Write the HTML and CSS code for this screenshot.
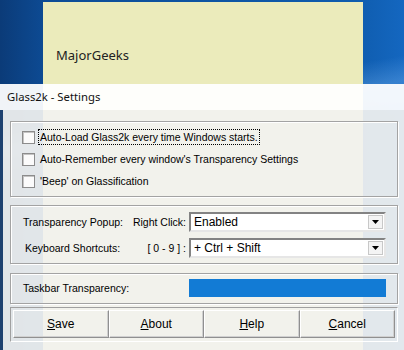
FILE: index.html
```html
<!DOCTYPE html>
<html lang="en">
<head>
    <meta charset="UTF-8">
    <title>Glass2k - Settings</title>
    <link rel="stylesheet" href="styles.css">
</head>
<body>
    <div class="desktop">
        <div class="note"><span>MajorGeeks</span></div>

        <div class="window">
            <div class="titlebar">Glass2k - Settings</div>
            <div class="client">
                <div class="group options">
                    <label class="check"><span class="box"></span><span class="focus">Auto-Load Glass2k every time Windows starts.</span></label>
                    <label class="check"><span class="box"></span><span>Auto-Remember every window's Transparency Settings</span></label>
                    <label class="check"><span class="box"></span><span>'Beep' on Glassification</span></label>
                </div>

                <div class="group popup">
                    <span class="lbl">Transparency Popup:</span>
                    <span class="sub">Right Click:</span>
                    <div class="combo">
                        <span>Enabled</span>
                        <span class="drop"><svg width="7" height="4" viewBox="0 0 7 4"><path d="M0 0h7L3.5 4z" fill="#000"/></svg></span>
                    </div>

                    <span class="lbl shift">Keyboard Shortcuts:</span>
                    <span class="sub">[ 0 - 9 ] :</span>
                    <div class="combo">
                        <span>+ Ctrl + Shift</span>
                        <span class="drop"><svg width="7" height="4" viewBox="0 0 7 4"><path d="M0 0h7L3.5 4z" fill="#000"/></svg></span>
                    </div>
                </div>

                <div class="group taskbar">
                    <span class="lbl">Taskbar Transparency:</span>
                    <div class="bar"></div>
                </div>

                <div class="buttons">
                    <button><u>S</u>ave</button>
                    <button><u>A</u>bout</button>
                    <button><u>H</u>elp</button>
                    <button><u>C</u>ancel</button>
                </div>
            </div>
        </div>
    </div>
</body>
</html>
```

FILE: styles.css
```css
body {
    margin: 0;
    font-family: "Liberation Sans", Arial, sans-serif;
    font-size: 10.5px;
    color: #000;
}
.desktop {
    width: 404px;
    height: 350px;
    display: grid;
    grid-template-columns: 43px 320px 1fr;
    grid-template-rows: 84px 1fr;
    background:
        linear-gradient(170deg, transparent 0 30%, rgba(120,180,240,0.35) 36%, transparent 44%),
        linear-gradient(90deg, #0b3b78 0%, #0d4c96 12%, #0f5cae 88%, #1467c0 100%);
    overflow: hidden;
}
.note {
    grid-column: 2;
    grid-row: 1 / 3;
    margin-top: 2px;
    background: #ebebbb;
    padding: 43px 13px 0;
    font-family: "Noto Sans", sans-serif;
    font-size: 13px;
    color: #222;
    line-height: 20px;
}
.window {
    grid-column: 1 / -1;
    grid-row: 2;
    z-index: 1;
    display: flex;
    flex-direction: column;
}
.titlebar {
    height: 26px;
    line-height: 26px;
    padding-left: 7px;
    background: rgba(255, 255, 255, 0.94);
    font-family: "Noto Sans", sans-serif;
    font-size: 11.3px;
    color: #111;
}
.client {
    flex: 1;
    background: rgba(242, 242, 240, 0.93);
    border-left: 3px solid #1d416f;
    padding: 11px 6px 0 7px;
}
.group {
    border: 1px solid #a3a3a3;
    box-shadow: inset 1px 1px #fff, 1px 1px #fff;
}
.options {
    padding: 4px 11px;
}
.check {
    display: flex;
    align-items: center;
    height: 22px;
    gap: 5px;
}
.box {
    width: 11px;
    height: 11px;
    border: 1px solid #8c8c8c;
    box-shadow: inset 1px 1px #c4c4c4;
    background: #fbfbfb;
}
.focus {
    outline: 1px dotted #000;
    outline-offset: 1px;
}
.popup {
    margin-top: 8px;
    padding: 6px 11px 5px 12px;
    display: grid;
    grid-template-columns: auto 1fr 197px;
    row-gap: 6px;
    align-items: center;
}
.lbl.shift {
    padding-left: 2px;
}
.sub {
    text-align: right;
    padding-right: 3px;
}
.combo {
    height: 16px;
    display: flex;
    align-items: center;
    justify-content: space-between;
    border: 2px solid;
    border-color: #838383 #e6e6e6 #e6e6e6 #838383;
    background: #fff;
    padding-left: 3px;
    font-size: 12px;
}
.drop {
    width: 13px;
    height: 12px;
    margin-right: 1px;
    display: flex;
    align-items: center;
    justify-content: center;
    border: 1px solid #c8c8c8;
    background: #f4f4f4;
}
.taskbar {
    margin-top: 9px;
    padding: 5px 11px 6px 12px;
    display: flex;
    align-items: center;
    justify-content: space-between;
}
.bar {
    width: 197px;
    height: 18px;
    background: #127bd5;
}
.buttons {
    margin-top: 3px;
    padding: 2px 2px 3px;
    border: 1px solid;
    border-color: #a0a0a0 #fff #fff #a0a0a0;
    display: grid;
    grid-template-columns: repeat(4, 1fr);
}
.buttons button {
    height: 28px;
    font-family: inherit;
    font-size: 12px;
    color: #000;
    background: transparent;
    border: 1px solid;
    border-color: #fff #909090 #909090 #fff;
    box-shadow: inset -1px -1px #d0d0d0;
    padding: 0;
}
```
